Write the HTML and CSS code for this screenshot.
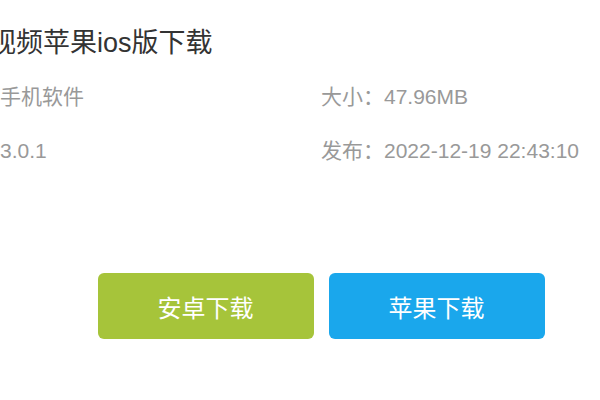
FILE: index.html
```html
<!DOCTYPE html>
<html lang="zh-CN">
<head>
<meta charset="utf-8">
<title>视频苹果ios版下载</title>
<link rel="stylesheet" href="styles.css">
</head>
<body>
<div class="page">
  <h1 class="title">视频苹果ios版下载</h1>
  <div class="info">
    <div class="cell">手机软件</div>
    <div class="cell">大小：47.96MB</div>
    <div class="cell">3.0.1</div>
    <div class="cell">发布：2022-12-19 22:43:10</div>
  </div>
  <div class="actions">
    <a class="btn btn-android" href="#">安卓下载</a>
    <a class="btn btn-ios" href="#">苹果下载</a>
  </div>
</div>
</body>
</html>
```

FILE: styles.css
```css
html, body {
  margin: 0;
  padding: 0;
  background: #fff;
  overflow: hidden;
}
body {
  font-family: "Liberation Sans", Arial, "Noto Sans CJK SC", sans-serif;
  width: 600px;
  height: 400px;
}
.page {
  width: 642px;
  padding-top: 28px;
}
.title {
  margin: 0 0 0 -11px;
  font-size: 27px;
  line-height: 30px;
  font-weight: normal;
  color: #333;
  white-space: nowrap;
}
.info {
  margin-top: 12px;
  display: grid;
  grid-template-columns: 1fr 1fr;
  font-size: 21px;
  line-height: 54px;
  color: #999;
}
.cell {
  white-space: nowrap;
}
.actions {
  margin-top: 95px;
  display: flex;
  justify-content: center;
  gap: 15px;
}
.btn {
  width: 216px;
  height: 66px;
  border-radius: 6px;
  display: flex;
  align-items: center;
  justify-content: center;
  color: #fff;
  font-size: 24px;
  text-decoration: none;
}
.btn-android {
  background: #a6c43a;
}
.btn-ios {
  background: #1aa7ec;
}
```
